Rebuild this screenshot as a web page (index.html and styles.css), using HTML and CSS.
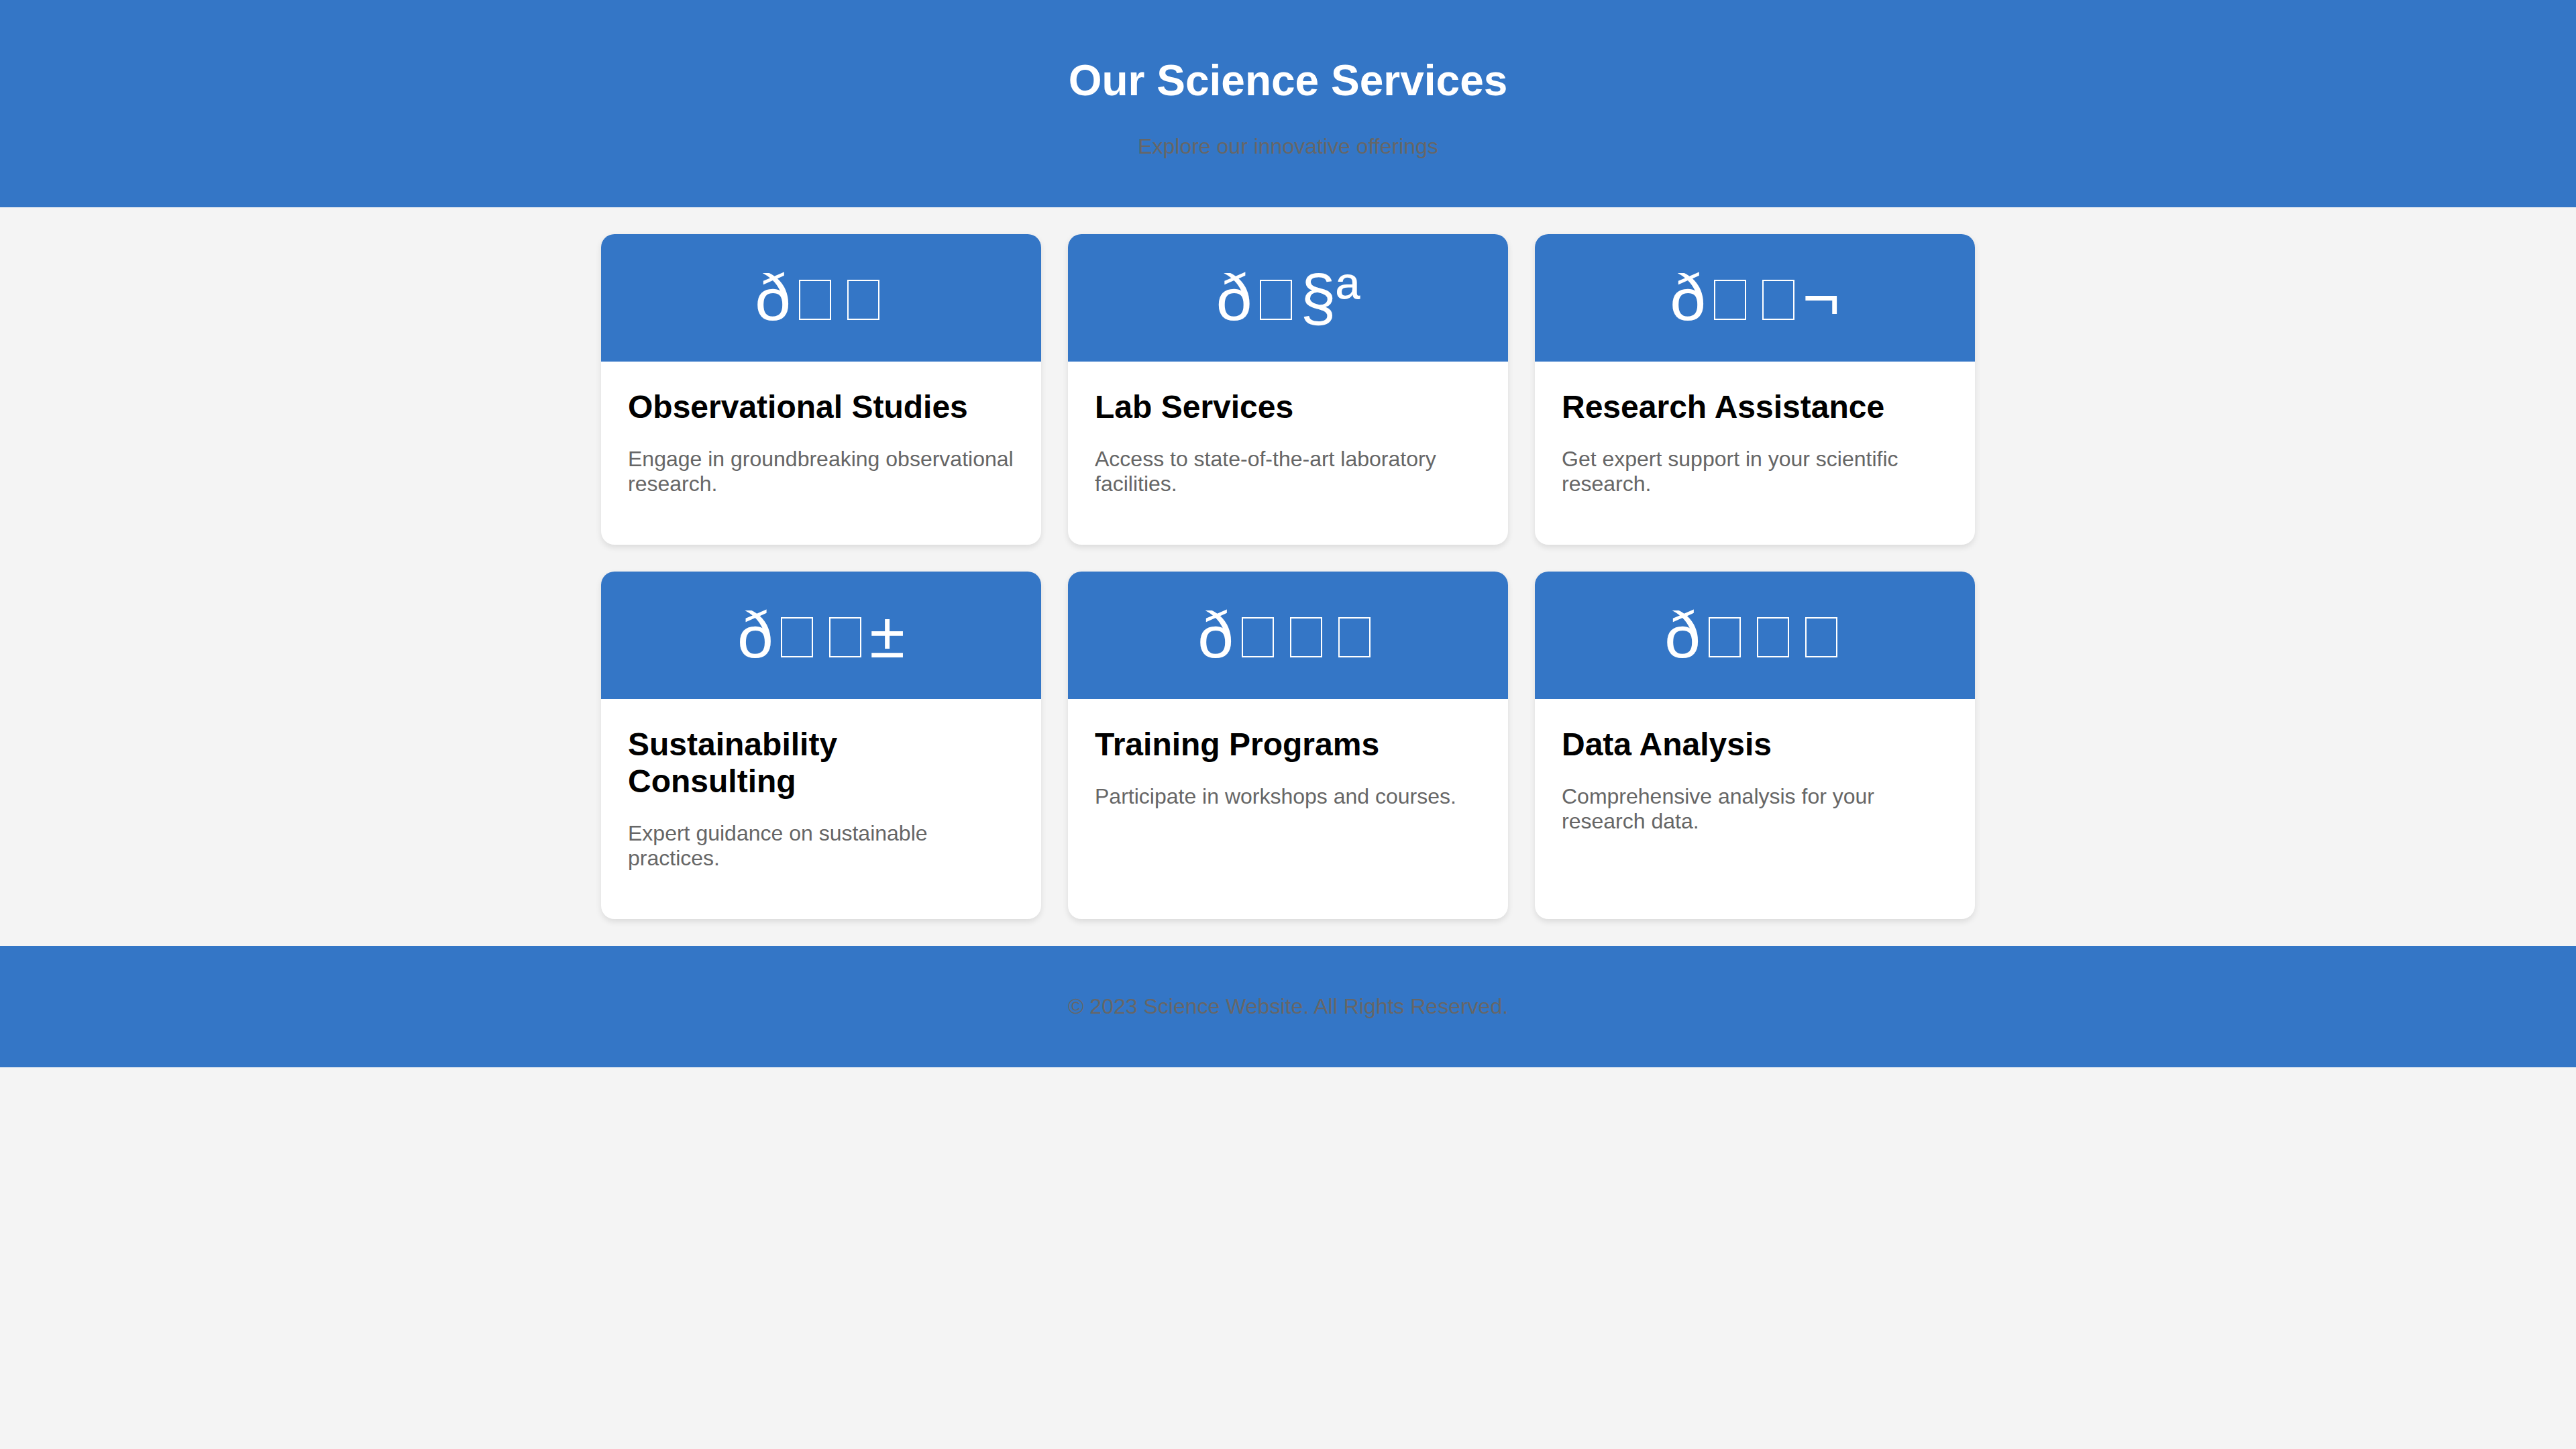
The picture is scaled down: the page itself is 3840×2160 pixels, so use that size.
FILE: index.html
```html
<!DOCTYPE html>
<html lang="en">
<head>
<meta charset="UTF-8">
<title>Our Science Services</title>
<link rel="stylesheet" href="styles.css">
</head>
<body>
<header class="site-header">
  <h1 class="site-title">Our Science Services</h1>
  <p class="site-subtitle">Explore our innovative offerings</p>
</header>
<main class="services">
  <div class="card">
    <div class="card-icon">ð<span class="tofu"></span><span class="tofu"></span></div>
    <div class="card-body">
      <h3 class="card-title">Observational Studies</h3>
      <p class="card-text">Engage in groundbreaking observational research.</p>
    </div>
  </div>
  <div class="card">
    <div class="card-icon">ð<span class="tofu"></span>§ª</div>
    <div class="card-body">
      <h3 class="card-title">Lab Services</h3>
      <p class="card-text">Access to state-of-the-art laboratory facilities.</p>
    </div>
  </div>
  <div class="card">
    <div class="card-icon">ð<span class="tofu"></span><span class="tofu"></span>¬</div>
    <div class="card-body">
      <h3 class="card-title">Research Assistance</h3>
      <p class="card-text">Get expert support in your scientific research.</p>
    </div>
  </div>
  <div class="card">
    <div class="card-icon">ð<span class="tofu"></span><span class="tofu"></span>±</div>
    <div class="card-body">
      <h3 class="card-title">Sustainability Consulting</h3>
      <p class="card-text">Expert guidance on sustainable practices.</p>
    </div>
  </div>
  <div class="card">
    <div class="card-icon">ð<span class="tofu"></span><span class="tofu"></span><span class="tofu"></span></div>
    <div class="card-body">
      <h3 class="card-title">Training Programs</h3>
      <p class="card-text">Participate in workshops and courses.</p>
    </div>
  </div>
  <div class="card">
    <div class="card-icon">ð<span class="tofu"></span><span class="tofu"></span><span class="tofu"></span></div>
    <div class="card-body">
      <h3 class="card-title">Data Analysis</h3>
      <p class="card-text">Comprehensive analysis for your research data.</p>
    </div>
  </div>
</main>
<footer class="site-footer">
  <p class="footer-text">© 2023 Science Website. All Rights Reserved.</p>
</footer>
</body>
</html>
```
FILE: styles.css
```css
html, body {
  margin: 0;
  padding: 0;
}
body {
  font-family: "Liberation Sans", Arial, sans-serif;
  font-size: 32px;
  background: #f4f4f4;
  color: #000;
}
.site-header {
  background: #3476c6;
  color: #fff;
  text-align: center;
  padding: 40px;
}
.site-title {
  font-size: 64px;
  margin: 42.88px 0;
  line-height: normal;
}
.site-subtitle {
  color: #666;
  margin: 32px 0;
}
.services {
  max-width: 2048px;
  margin: 0 auto;
  padding: 40px 0;
  display: grid;
  grid-template-columns: repeat(3, 1fr);
  gap: 40px;
}
.card {
  background: #fff;
  border-radius: 20px;
  box-shadow: 0 4px 10px rgba(0, 0, 0, 0.1);
  overflow: hidden;
}
.card-icon {
  background: #3476c6;
  color: #fff;
  text-align: center;
  font-size: 96px;
  padding: 40px 0;
  line-height: normal;
}
.tofu {
  display: inline-block;
  box-sizing: border-box;
  width: 48px;
  height: 60px;
  margin: 0 12px;
  border: 2px solid #fff;
  vertical-align: baseline;
}
.card-body {
  padding: 40px;
}
.card-title {
  font-size: 48px;
  margin: 0;
  line-height: normal;
}
.card-text {
  color: #666;
  margin: 32px 0;
}
.site-footer {
  background: #3476c6;
  text-align: center;
  padding: 40px;
}
.footer-text {
  color: #666;
  margin: 32px 0;
}
```
